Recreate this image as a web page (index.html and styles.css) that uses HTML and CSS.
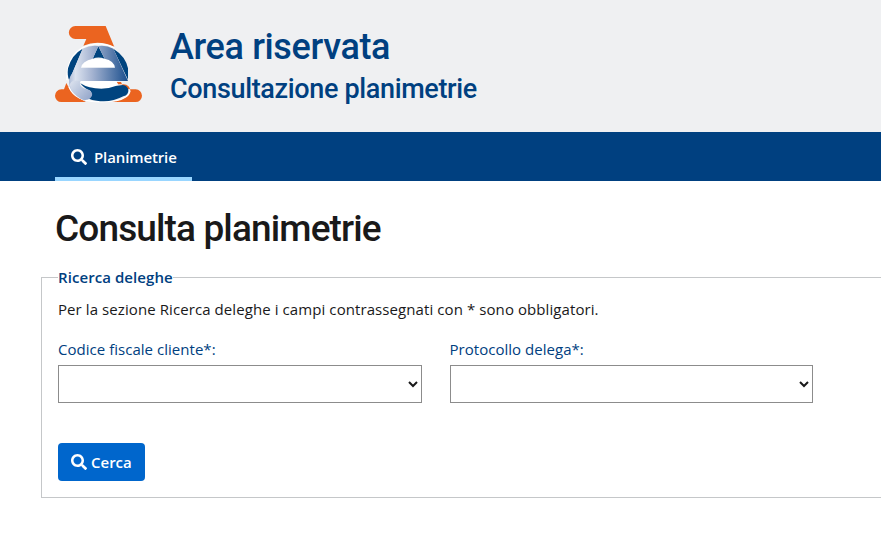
FILE: index.html
```html
<!DOCTYPE html>
<html lang="it">
<head>
<meta charset="utf-8">
<title>Consulta planimetrie</title>
<link rel="stylesheet" href="styles.css">
</head>
<body>
<header class="header">
  <svg class="logo" viewBox="30 30 264 234" aria-hidden="true">
    <defs>
      <linearGradient id="silver" x1="70" y1="0" x2="250" y2="0" gradientUnits="userSpaceOnUse">
        <stop offset="0" stop-color="#a9b8d5"/><stop offset=".12" stop-color="#dce3ef"/><stop offset=".4" stop-color="#a4b3d1"/><stop offset="1" stop-color="#194d8c"/>
      </linearGradient>
      <linearGradient id="tail" x1="70" y1="190" x2="142" y2="250" gradientUnits="userSpaceOnUse">
        <stop offset="0" stop-color="#e4e9f2"/><stop offset="1" stop-color="#91a4c9"/>
      </linearGradient>
    </defs>
    <path fill="#eb6420" d="M91 33H182L208 96Q162 73 115 92L124 72H91A19.500 19.500 0 0 1 91 33ZM64 204Q80 242 123 261H49A19 19 0 0 1 49 223H57ZM214 201H228L238 223H272A19 19 0 0 1 272 261H200Q248 251 257 230Q255 209 235 208H219Z"/>
    <path fill="#fff" d="M108 158Q111 138 143 131H179Q207 137 210 158ZM106 198H214L219 208L212 213Q160 232 106 205Z"/>
    <path fill="none" stroke="#fff" stroke-width="4" d="M66 196Q64 125 113 98Q160 75 208 98M72 216Q90 258 155 260Q220 262 242 246Q255 239 253 224"/>
    <path fill="#00447f" d="M113 101Q80 119 69 160Q66 184 73 196ZM205 101Q242 124 249 160V194ZM160 94L143 131Q160 124 179 131Z"/>
    <path fill="url(#silver)" d="M113 101Q135 90 160 93L143 131Q111 138 108 158H210Q207 137 179 131L160 93Q185 90 205 101L249 198H106Q101 211 112 217Q128 229 120 257Q83 242 74 215Q67 193 82 174Z"/>
    <path fill="#00447f" d="M106 205Q130 221 169 221Q193 221 212 213L233 210Q249 212 250 226Q251 240 235 244Q197 264 155 257Q140 255 132 251Q144 242 137 228Q117 220 106 205Z"/>
    <path fill="url(#tail)" d="M106 198Q101 211 113 219L133 225Q149 238 136 249Q124 260 107 251Q80 235 74 210Q78 193 106 198Z"/>
  </svg>
  <div class="brand">
    <div class="brand-title">Area riservata</div>
    <div class="brand-subtitle">Consultazione planimetrie</div>
  </div>
</header>
<nav class="nav">
  <a class="tab"><svg class="search" viewBox="0 0 512 512" aria-hidden="true"><path d="M505 442.700 405.300 343c-4.500-4.500-10.600-7-17-7H372c27.600-35.300 44-79.700 44-128C416 93.100 322.900 0 208 0S0 93.100 0 208s93.100 208 208 208c48.300 0 92.700-16.400 128-44v16.300c0 6.400 2.500 12.500 7 17l99.700 99.700c9.400 9.400 24.600 9.400 33.900 0l28.300-28.300c9.400-9.400 9.400-24.600.1-34zM208 336c-70.700 0-128-57.200-128-128 0-70.700 57.200-128 128-128 70.700 0 128 57.200 128 128 0 70.700-57.200 128-128 128z"/></svg><span class="tab-label">Planimetrie</span></a>
</nav>
<main>
  <h1 class="title">Consulta planimetrie</h1>
  <fieldset class="panel">
    <legend class="legend">Ricerca deleghe</legend>
    <p class="note">Per la sezione Ricerca deleghe i campi contrassegnati con * sono obbligatori.</p>
    <div class="fields">
      <div class="field"><label class="label" for="cf">Codice fiscale cliente*:</label><select class="select" id="cf"></select></div>
      <div class="field"><label class="label" for="pd">Protocollo delega*:</label><select class="select" id="pd"></select></div>
    </div>
    <button class="button" type="button"><svg class="search" viewBox="0 0 512 512" aria-hidden="true"><path d="M505 442.700 405.300 343c-4.500-4.500-10.600-7-17-7H372c27.600-35.300 44-79.700 44-128C416 93.100 322.900 0 208 0S0 93.100 0 208s93.100 208 208 208c48.300 0 92.700-16.400 128-44v16.300c0 6.400 2.500 12.500 7 17l99.700 99.700c9.400 9.400 24.600 9.400 33.900 0l28.300-28.300c9.400-9.400 9.400-24.600.1-34zM208 336c-70.700 0-128-57.200-128-128 0-70.700 57.200-128 128-128 70.700 0 128 57.200 128 128 0 70.700-57.200 128-128 128z"/></svg><span>Cerca</span></button>
  </fieldset>
</main>
</body>
</html>
```
FILE: styles.css
```css
* { box-sizing: border-box; }
body { margin: 0; background: #fff; color: #19191a; font: 15px/24px "Open Sans", "Noto Sans", sans-serif; }
.header { display: flex; height: 132px; padding: 25px 0 0 55px; background: #eff0f2; }
.logo { width: 88px; height: 78px; flex: none; }
.brand { margin-left: 27px; color: #004080; font-family: Roboto, sans-serif; font-weight: 500; white-space: nowrap; }
.brand-title { font-size: 36px; line-height: 44px; letter-spacing: -0.35px; }
.brand-subtitle { font-size: 27px; line-height: 40px; letter-spacing: -0.35px; }
.nav { height: 49px; padding-left: 55px; background: #004080; }
.tab { display: flex; align-items: center; width: 137px; height: 49px; padding: 5px 0 0 16px; border-bottom: 4px solid #99d6ff; color: #fff; font-weight: 600; letter-spacing: -0.12px; white-space: nowrap; }
.search { width: 16px; height: 16px; flex: none; fill: currentColor; }
.tab-label { margin-left: 7px; }
.title { margin: 25px 0 0 55px; font: 500 37px/46px Roboto, sans-serif; letter-spacing: -0.87px; white-space: nowrap; }
.panel { height: 233px; margin: 13px 0 0 41px; padding: 0 16px; border: 1px solid #c5c7c9; border-right: 0; }
.legend { padding: 0; color: #004080; font-weight: 600; letter-spacing: 0.07px; }
.note { margin: 8px 0 16px; letter-spacing: 0.085px; white-space: nowrap; }
.fields { display: flex; gap: 28px; }
.field { width: 363.5px; }
.label { display: block; width: max-content; color: #004080; letter-spacing: 0.03px; }
.select { display: block; width: 100%; height: 38px; margin-top: 4px; border: 1px solid #8c8c8c; border-radius: 0; background: #fff; color: #19191a; font: inherit; }
.button { display: flex; align-items: center; gap: 4px; width: 87px; height: 38px; margin-top: 40px; padding: 0 0 0 13px; border: 0; border-radius: 4px; background: #06c; color: #fff; font: inherit; font-weight: 600; }
```
